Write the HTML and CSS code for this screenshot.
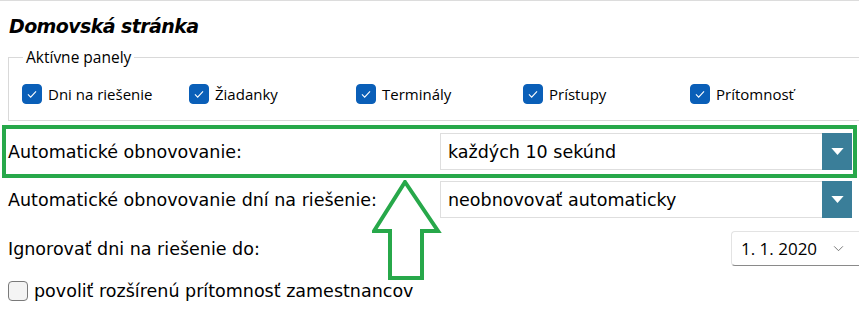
FILE: index.html
```html
<!DOCTYPE html>
<html lang="sk">
<head>
  <meta charset="UTF-8" />
  <title>Domovská stránka</title>
  <link rel="stylesheet" href="styles.css">
</head>
<body>
  <div class="page">
    <h1 class="title">Domovská stránka</h1>

    <fieldset class="panels">
      <legend>Aktívne panely</legend>
      <div class="panel-list">
        <label class="check"><span class="box on"><svg viewBox="0 0 20 20"><path d="M5.5 10.5l3 3 6-6.5" /></svg></span>Dni na riešenie</label>
        <label class="check"><span class="box on"><svg viewBox="0 0 20 20"><path d="M5.5 10.5l3 3 6-6.5" /></svg></span>Žiadanky</label>
        <label class="check"><span class="box on"><svg viewBox="0 0 20 20"><path d="M5.5 10.5l3 3 6-6.5" /></svg></span>Terminály</label>
        <label class="check"><span class="box on"><svg viewBox="0 0 20 20"><path d="M5.5 10.5l3 3 6-6.5" /></svg></span>Prístupy</label>
        <label class="check"><span class="box on"><svg viewBox="0 0 20 20"><path d="M5.5 10.5l3 3 6-6.5" /></svg></span>Prítomnosť</label>
      </div>
    </fieldset>

    <div class="row highlight">
      <span class="label">Automatické obnovovanie:</span>
      <div class="select">
        <span class="value">každých 10 sekúnd</span>
        <span class="btn"><svg viewBox="0 0 14 8"><path d="M0 0h14L7 8z" /></svg></span>
      </div>
    </div>

    <div class="row">
      <span class="label">Automatické obnovovanie dní na riešenie:</span>
      <div class="select">
        <span class="value">neobnovovať automaticky</span>
        <span class="btn"><svg viewBox="0 0 14 8"><path d="M0 0h14L7 8z" /></svg></span>
      </div>
    </div>

    <div class="row date-row">
      <span class="label">Ignorovať dni na riešenie do:</span>
      <div class="date">
        <span>1. 1. 2020</span>
        <svg class="chev" viewBox="0 0 12 8"><path d="M1 1.5l5 5 5-5" /></svg>
      </div>
    </div>

    <label class="plain-check">
      <span class="box"></span>povoliť rozšírenú prítomnosť zamestnancov
    </label>

    <!-- šípka -->
    <svg class="arrow" viewBox="0 0 70 102">
      <path d="M33 2 L66 51 L50 51 L50 98 L18 98 L18 51 L2 51 Z" />
    </svg>
  </div>
</body>
</html>
```

FILE: styles.css
```css
* {
  box-sizing: border-box;
}

body {
  margin: 0;
  background: #fff;
  overflow: hidden;
  color: #000;
}

.page {
  position: relative;
  width: 859px;
  height: 315px;
  border-top: 1px solid #dcdcdc;
}

.title {
  margin: 0;
  padding: 14px 0 0 9px;
  height: 45px;
  font-family: "DejaVu Sans", sans-serif;
  font-size: 19px;
  font-weight: bold;
  font-style: italic;
  letter-spacing: -0.6px;
}

.panels {
  margin: 0 0 0 8px;
  padding: 0 0 0 13px;
  height: 75px;
  border: 1px solid #d9d9d9;
  border-right: none;
  font-family: "Open Sans", sans-serif;
  font-size: 15px;
}

.panels legend {
  padding: 0 3px;
  margin-left: 1px;
  font-size: 15.5px;
}

.panel-list {
  display: flex;
  padding-top: 16px;
}

.check {
  display: flex;
  align-items: center;
  width: 167px;
  font-size: 15px;
}

.box {
  display: inline-flex;
  align-items: center;
  justify-content: center;
  width: 20px;
  height: 20px;
  margin-right: 6px;
  border-radius: 4px;
  border: 1px solid #7a7a7a;
  background: #f4f4f4;
}

.box.on {
  border-color: #0a5fb8;
  background: #0a5fb8;
}

.box svg {
  width: 18px;
  height: 18px;
  fill: none;
  stroke: #fff;
  stroke-width: 1.2;
}

.row {
  display: flex;
  align-items: center;
  padding: 3px 7px 3px 8px;
  font-family: "DejaVu Sans", sans-serif;
  font-size: 17.5px;
}

.row .label {
  flex: 0 0 432px;
}

.row.highlight {
  margin: 4px 2px 0 2px;
  padding: 4px 1px 4px 2px;
  border: 4px solid #27a84a;
}

.select {
  flex: 1;
  display: flex;
  height: 37px;
  border: 1px solid #dedede;
  background: #fff;
}

.select .value {
  flex: 1;
  display: flex;
  align-items: center;
  padding-left: 7px;
}

.select .btn {
  width: 30px;
  display: flex;
  align-items: center;
  justify-content: center;
  background: #3a7e99;
  margin: -1px -1px -1px 0;
}

.select .btn svg {
  width: 13px;
  height: 7px;
  fill: #fff;
}

.date-row {
  margin-top: 7px;
  padding-right: 0;
  justify-content: space-between;
}

.date {
  width: 128px;
  height: 35px;
  display: flex;
  align-items: center;
  justify-content: space-between;
  padding: 0 9px 0 9px;
  border: 1px solid #e3e3e3;
  border-bottom: 1px solid #8a8a8a;
  border-right: none;
  border-radius: 4px 0 0 4px;
  font-family: "Open Sans", sans-serif;
  font-size: 17px;
}

.chev {
  width: 11px;
  height: 7px;
  margin-right: 6px;
  fill: none;
  stroke: #666;
  stroke-width: 1;
}

.plain-check {
  display: flex;
  align-items: center;
  margin-top: 12px;
  padding-left: 8px;
  font-family: "DejaVu Sans", sans-serif;
  font-size: 17.5px;
}

.arrow {
  position: absolute;
  left: 372px;
  top: 179px;
  width: 70px;
  height: 102px;
  fill: none;
  stroke: #27a84a;
  stroke-width: 4;
}
```
